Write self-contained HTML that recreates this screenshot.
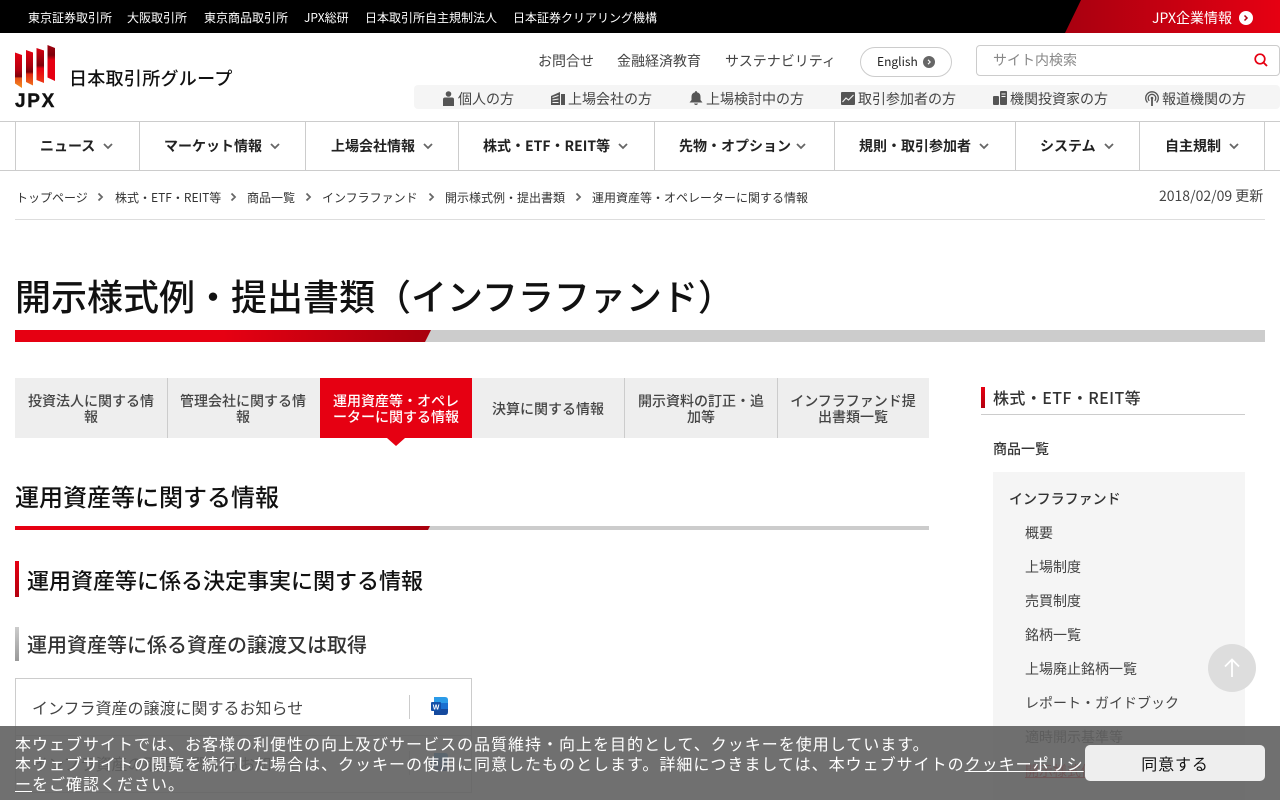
<!DOCTYPE html>
<html lang="ja"><head><meta charset="utf-8"><title>開示様式例・提出書類（インフラファンド）</title>
<style>
html,body{margin:0;padding:0;width:1280px;height:800px;overflow:hidden}
body{background:#fff;color:#222;font-size:14px}
body,.jp{font-family:"Noto Sans CJK JP","Liberation Sans",sans-serif}
#w{position:relative;width:1280px;height:800px;overflow:hidden}
.t{position:absolute;white-space:nowrap;line-height:20px}
.a{position:absolute}
.top{color:#fff;font-size:12px;top:8px}
.ut{color:#444;font-size:14px;top:51px}
.au{color:#444;font-size:14px;top:89px}
.nv{font-size:14px;font-weight:700;top:136px;color:#222}
.vl{position:absolute;top:122px;height:48px;width:1px;background:#ccc}
.bc{font-size:12px;top:188px;color:#333}
.tab{position:absolute;top:378px;height:60px;width:152px;color:#444;font-size:14px;font-weight:500;line-height:16px;text-align:center;display:flex;align-items:center;justify-content:center;padding:2px 12px 0;box-sizing:border-box}
.si{font-size:14px;color:#444;left:1025px}
svg{position:absolute;overflow:visible}
</style></head><body><div id="w">

<div class="a" style="left:0;top:0;width:1280px;height:33px;background:#000"></div>
<div class="a" style="left:1065px;top:0;width:215px;height:33px;background:linear-gradient(90deg,#a80010,#e60012);clip-path:polygon(16px 0,100% 0,100% 100%,0 100%)"></div>
<span class="t top" style="left:28px">東京証券取引所</span>
<span class="t top" style="left:127px">大阪取引所</span>
<span class="t top" style="left:204px">東京商品取引所</span>
<span class="t top" style="left:304px">JPX総研</span>
<span class="t top" style="left:365px">日本取引所自主規制法人</span>
<span class="t top" style="left:513px">日本証券クリアリング機構</span>
<span class="t" style="left:1152px;top:8px;color:#fff;font-size:14px">JPX企業情報</span>
<svg style="left:1239px;top:11px" width="14" height="14" viewBox="0 0 14 14"><circle cx="7" cy="7" r="7" fill="#fff"/><path d="M5.5 4.5 8 7 5.500 9.500" fill="none" stroke="#b00010" stroke-width="1.500"/></svg>

<svg style="left:15px;top:45px" width="40" height="44" viewBox="0 0 40 44">
<defs>
<linearGradient id="g1" x1="0" y1="0" x2="0" y2="1"><stop offset="0" stop-color="#e60012"/><stop offset=".5" stop-color="#b30010"/><stop offset=".68" stop-color="#7c000a"/><stop offset=".72" stop-color="#e8501a"/><stop offset="1" stop-color="#f39020"/></linearGradient>
<linearGradient id="g2" x1="0" y1="0" x2="0" y2="1"><stop offset="0" stop-color="#e60012"/><stop offset=".45" stop-color="#a8000e"/><stop offset=".62" stop-color="#780009"/><stop offset=".68" stop-color="#e02a14"/><stop offset="1" stop-color="#f0701c"/></linearGradient>
<linearGradient id="g3" x1="0" y1="0" x2="0" y2="1"><stop offset="0" stop-color="#d80010"/><stop offset=".42" stop-color="#8c000c"/><stop offset=".5" stop-color="#7c000a"/><stop offset=".58" stop-color="#e60012"/><stop offset="1" stop-color="#ec3a16"/></linearGradient>
<linearGradient id="g4" x1="0" y1="0" x2="0" y2="1"><stop offset="0" stop-color="#a0000e"/><stop offset=".28" stop-color="#7c000a"/><stop offset=".42" stop-color="#e60012"/><stop offset="1" stop-color="#e60012"/></linearGradient>
</defs>
<path d="M0 7.500 7 10V43L0 38.500Z" fill="url(#g1)"/>
<path d="M11 5 18 7.500V40.500L11 37Z" fill="url(#g2)"/>
<path d="M21.500 3 29 5.500V38L21.500 35Z" fill="url(#g3)"/>
<path d="M32.500 0 40 3V36L32.500 32.500Z" fill="url(#g4)"/>
</svg>
<span class="t" style="left:15px;top:92px;font:bold 19px/20px 'Liberation Sans',sans-serif;letter-spacing:1.700px;color:#111;-webkit-text-stroke:.4px #111">JPX</span>
<span class="t" style="left:69px;top:68px;font-size:18px;color:#111;line-height:20px;letter-spacing:.3px;font-weight:500">日本取引所グループ</span>

<span class="t ut" style="left:538px">お問合せ</span>
<span class="t ut" style="left:617px">金融経済教育</span>
<span class="t ut" style="left:725px">サステナビリティ</span>
<div class="a" style="left:860px;top:47px;width:92px;height:30px;border:1px solid #ccc;border-radius:16px;box-sizing:border-box"></div>
<span class="t" style="left:877px;top:52px;font-size:12px;color:#222">English</span>
<svg style="left:923px;top:56px" width="12" height="12" viewBox="0 0 12 12"><circle cx="6" cy="6" r="6" fill="#666"/><path d="M5 3.800 7.200 6 5 8.200" fill="none" stroke="#fff" stroke-width="1.100"/></svg>
<div class="a" style="left:976px;top:45px;width:304px;height:31px;border:1px solid #ccc;border-radius:4px;box-sizing:border-box"></div>
<span class="t" style="left:993px;top:50px;font-size:14px;color:#888">サイト内検索</span>
<svg style="left:1254px;top:53px" width="14" height="14" viewBox="0 0 14 14"><circle cx="6" cy="6" r="4.800" fill="none" stroke="#e60012" stroke-width="1.700"/><path d="M9.500 9.500 13 13" stroke="#e60012" stroke-width="1.900"/></svg>

<div class="a" style="left:414px;top:85px;width:866px;height:24px;background:#f5f5f5;border-radius:4px"></div>
<svg style="left:442px;top:91px" width="13" height="15" viewBox="0 0 13 15" fill="#555"><circle cx="6.500" cy="3" r="2.800"/><path d="M1 15V8.500Q1 6.500 3 6.500H10Q12 6.500 12 8.500V15Z"/></svg>
<span class="t au" style="left:458px">個人の方</span>
<svg style="left:551px;top:92px" width="14" height="13" viewBox="0 0 14 13" fill="#555"><path d="M0 4 9 0V13H0ZM10 2H14V13H10Z"/><path d="M1.500 5.500 7.500 3.500M1.500 8 7.500 7M1.500 10.500H7.500" stroke="#f5f5f5" fill="none"/></svg>
<span class="t au" style="left:568px">上場会社の方</span>
<svg style="left:689px;top:91px" width="14" height="14" viewBox="0 0 14 14" fill="#555"><path d="M7 0Q8 0 8 1.200Q11.500 2 11.500 6V9L13.500 11.500H.5L2.500 9V6Q2.500 2 6 1.200Q6 0 7 0ZM5 12.500H9Q8.500 14 7 14T5 12.500Z"/></svg>
<span class="t au" style="left:706px">上場検討中の方</span>
<svg style="left:841px;top:92px" width="14" height="13" viewBox="0 0 14 13"><rect width="14" height="13" rx="1" fill="#555"/><path d="M1.500 10 5 6 7.500 8 12.500 3" fill="none" stroke="#f5f5f5" stroke-width="1.100"/></svg>
<span class="t au" style="left:858px">取引参加者の方</span>
<svg style="left:993px;top:91px" width="14" height="14" viewBox="0 0 14 14" fill="#555"><rect x="0" y="5" width="6" height="9" rx="1"/><rect x="7" y="0" width="7" height="14" rx="1"/><path d="M8.500 3H12.500M8.500 5.500H12.500" stroke="#f5f5f5"/></svg>
<span class="t au" style="left:1010px">機関投資家の方</span>
<svg style="left:1145px;top:91px" width="14" height="15" viewBox="0 0 14 15" fill="none" stroke="#555" stroke-width="1.300"><path d="M2.500 11.500A6.300 6.300 0 1 1 11.500 11.500"/><path d="M4.300 9.800A3.800 3.800 0 1 1 9.700 9.800"/><circle cx="7" cy="7" r="1.300" fill="#555" stroke="none"/><path d="M7 7V15" stroke-width="1.800"/></svg>
<span class="t au" style="left:1162px">報道機関の方</span>

<div class="a" style="left:0;top:121px;width:1280px;height:50px;border-top:1px solid #ccc;border-bottom:1px solid #ccc;box-sizing:border-box"></div>
<i class="vl" style="left:15px"></i><i class="vl" style="left:139px"></i><i class="vl" style="left:305px"></i><i class="vl" style="left:458px"></i><i class="vl" style="left:654px"></i><i class="vl" style="left:834px"></i><i class="vl" style="left:1015px"></i><i class="vl" style="left:1139px"></i><i class="vl" style="left:1264px"></i>
<span class="t nv" style="left:40px">ニュース</span>
<span class="t nv" style="left:164px">マーケット情報</span>
<span class="t nv" style="left:331px">上場会社情報</span>
<span class="t nv" style="left:483px">株式・ETF・REIT等</span>
<span class="t nv" style="left:679px">先物・オプション</span>
<span class="t nv" style="left:859px">規則・取引参加者</span>
<span class="t nv" style="left:1040px">システム</span>
<span class="t nv" style="left:1165px">自主規制</span>
<svg style="left:0;top:0" width="1280" height="220" fill="none" stroke="#666" stroke-width="1.800"><path d="M104 144l4 4 4-4M271 144l4 4 4-4M424 144l4 4 4-4M619 144l4 4 4-4M797 144l4 4 4-4M980 144l4 4 4-4M1105 144l4 4 4-4M1230 144l4 4 4-4"/><path d="M98.500 193.500l3.500 3.500-3.500 3.500M231.500 193.500l3.500 3.500-3.500 3.500M306.500 193.500l3.500 3.500-3.500 3.500M429.500 193.500l3.500 3.500-3.500 3.500M576.500 193.500l3.500 3.500-3.500 3.500"/></svg>

<span class="t bc" style="left:16px">トップページ</span>
<span class="t bc" style="left:115px">株式・ETF・REIT等</span>
<span class="t bc" style="left:247px">商品一覧</span>
<span class="t bc" style="left:322px">インフラファンド</span>
<span class="t bc" style="left:445px">開示様式例・提出書類</span>
<span class="t bc" style="left:592px">運用資産等・オペレーターに関する情報</span>
<span class="t" style="left:1159px;top:186px;font-size:14px;color:#444">2018/02/09 更新</span>
<div class="a" style="left:15px;top:219px;width:1250px;height:1px;background:#ddd"></div>

<span class="t" style="left:15px;top:271px;font-size:36px;line-height:48px;font-weight:500;color:#111">開示様式例・提出書類（インフラファンド）</span>
<div class="a" style="left:15px;top:330px;width:1250px;height:12px;background:#ccc"></div>
<div class="a" style="left:15px;top:330px;width:416px;height:12px;background:linear-gradient(90deg,#e60012,#e60012 50%,#a8000e);clip-path:polygon(0 0,100% 0,calc(100% - 6px) 100%,0 100%)"></div>

<div class="a" style="left:15px;top:378px;width:914px;height:60px;background:#eee"></div>
<div class="a" style="left:320px;top:378px;width:152px;height:60px;background:#e60012"></div>
<div class="tab" style="left:15px">投資法人に関する情報</div>
<div class="tab" style="left:167px">管理会社に関する情報</div>
<div class="tab" style="left:320px;color:#fff">運用資産等・オペレーターに関する情報</div>
<div class="tab" style="left:472px">決算に関する情報</div>
<div class="tab" style="left:625px">開示資料の訂正・追加等</div>
<div class="tab" style="left:777px;width:152px">インフラファンド提出書類一覧</div>
<i class="a" style="left:167px;top:378px;width:1px;height:60px;background:#ccc"></i>
<i class="a" style="left:624px;top:378px;width:1px;height:60px;background:#ccc"></i>
<i class="a" style="left:777px;top:378px;width:1px;height:60px;background:#ccc"></i>
<svg style="left:387px;top:438px" width="18" height="8"><path d="M0 0H18L9 8Z" fill="#e60012"/></svg>

<span class="t" style="left:15px;top:480px;font-size:24px;line-height:32px;font-weight:500;color:#111">運用資産等に関する情報</span>
<div class="a" style="left:15px;top:526px;width:914px;height:4px;background:#ccc"></div>
<div class="a" style="left:15px;top:526px;width:415px;height:4px;background:linear-gradient(90deg,#e60012,#e60012 50%,#a8000e);clip-path:polygon(0 0,100% 0,calc(100% - 2px) 100%,0 100%)"></div>

<div class="a" style="left:15px;top:561px;width:4px;height:36px;background:linear-gradient(#e60012,#b3000f)"></div>
<span class="t" style="left:27px;top:565px;font-size:22px;line-height:30px;font-weight:500;color:#111">運用資産等に係る決定事実に関する情報</span>
<div class="a" style="left:15px;top:627px;width:4px;height:34px;background:linear-gradient(#ccc,#999)"></div>
<span class="t" style="left:27px;top:630px;font-size:20px;line-height:28px;font-weight:500;color:#333">運用資産等に係る資産の譲渡又は取得</span>

<div class="a" style="left:15px;top:678px;width:457px;height:115px;border:1px solid #ccc;box-sizing:border-box"></div>
<div class="a" style="left:15px;top:735px;width:457px;height:1px;background:#ccc"></div>
<span class="t" style="left:32px;top:697px;font-size:16px;color:#444">インフラ資産の譲渡に関するお知らせ</span>
<span class="t" style="left:32px;top:753px;font-size:16px;color:#444">インフラ資産の取得に関するお知らせ</span>
<i class="a" style="left:409px;top:695px;width:1px;height:24px;background:#ccc"></i>
<i class="a" style="left:409px;top:751px;width:1px;height:24px;background:#ccc"></i>
<svg style="left:431px;top:697px" width="17" height="18" viewBox="0 0 17 18"><path d="M3 0H14Q17 0 17 3V6H3Z" fill="#2b9be8"/><path d="M3 6H17V12H3Z" fill="#1a6fd0"/><path d="M3 12H17V15Q17 18 14 18H3Z" fill="#154a9e"/><rect x="0" y="5" width="10" height="9" rx="1" fill="#1350a8"/><text x="5" y="12.300" font-size="7" font-weight="700" fill="#fff" text-anchor="middle" font-family="Liberation Sans">W</text></svg>
<svg style="left:431px;top:753px" width="17" height="18" viewBox="0 0 17 18"><path d="M3 0H14Q17 0 17 3V6H3Z" fill="#2b9be8"/><path d="M3 6H17V12H3Z" fill="#1a6fd0"/><path d="M3 12H17V15Q17 18 14 18H3Z" fill="#154a9e"/><rect x="0" y="5" width="10" height="9" rx="1" fill="#1350a8"/></svg>

<div class="a" style="left:981px;top:387px;width:4px;height:21px;background:linear-gradient(#e60012,#b3000f)"></div>
<span class="t" style="left:993px;top:387px;font-size:16px;font-weight:500;color:#333;letter-spacing:.4px">株式・ETF・REIT等</span>
<div class="a" style="left:981px;top:414px;width:264px;height:1px;background:#ccc"></div>
<span class="t" style="left:993px;top:439px;font-size:14px;font-weight:500;color:#333">商品一覧</span>
<div class="a" style="left:993px;top:472px;width:252px;height:328px;background:#f5f5f5"></div>
<span class="t" style="left:1009px;top:489px;font-size:14px;font-weight:500;color:#333">インフラファンド</span>
<span class="t si" style="top:523px">概要</span>
<span class="t si" style="top:557px">上場制度</span>
<span class="t si" style="top:591px">売買制度</span>
<span class="t si" style="top:625px">銘柄一覧</span>
<span class="t si" style="top:659px">上場廃止銘柄一覧</span>
<span class="t si" style="top:693px">レポート・ガイドブック</span>
<span class="t si" style="top:727px">適時開示基準等</span>
<span class="t si" style="top:761px;color:#e60012;text-decoration:underline">開示様式例・提出書類</span>

<svg style="left:1208px;top:644px" width="48" height="48" viewBox="0 0 48 48"><circle cx="24" cy="24" r="24" fill="#ddd"/><path d="M24 33V16M17 22.500 24 15.500 31 22.500" fill="none" stroke="#fff" stroke-width="1.800"/></svg>

<div class="a" style="left:0;top:726px;width:1280px;height:74px;background:rgba(96,96,96,.9)"></div>
<div class="a" style="left:15px;top:733px;width:1075px;font-size:16px;line-height:20px;letter-spacing:1px;color:#fff;white-space:nowrap">本ウェブサイトでは、お客様の利便性の向上及びサービスの品質維持・向上を目的として、クッキーを使用しています。<br>本ウェブサイトの閲覧を続行した場合は、クッキーの使用に同意したものとします。詳細につきましては、本ウェブサイトの<span style="text-decoration:underline">クッキーポリシ</span><br><span style="text-decoration:underline">ー</span>をご確認ください。</div>
<div class="a" style="left:1085px;top:745px;width:180px;height:36px;background:#eee;border-radius:5px;text-align:center;line-height:36px;font-size:16px;letter-spacing:.85px;color:#111">同意する</div>
</div></body></html>
